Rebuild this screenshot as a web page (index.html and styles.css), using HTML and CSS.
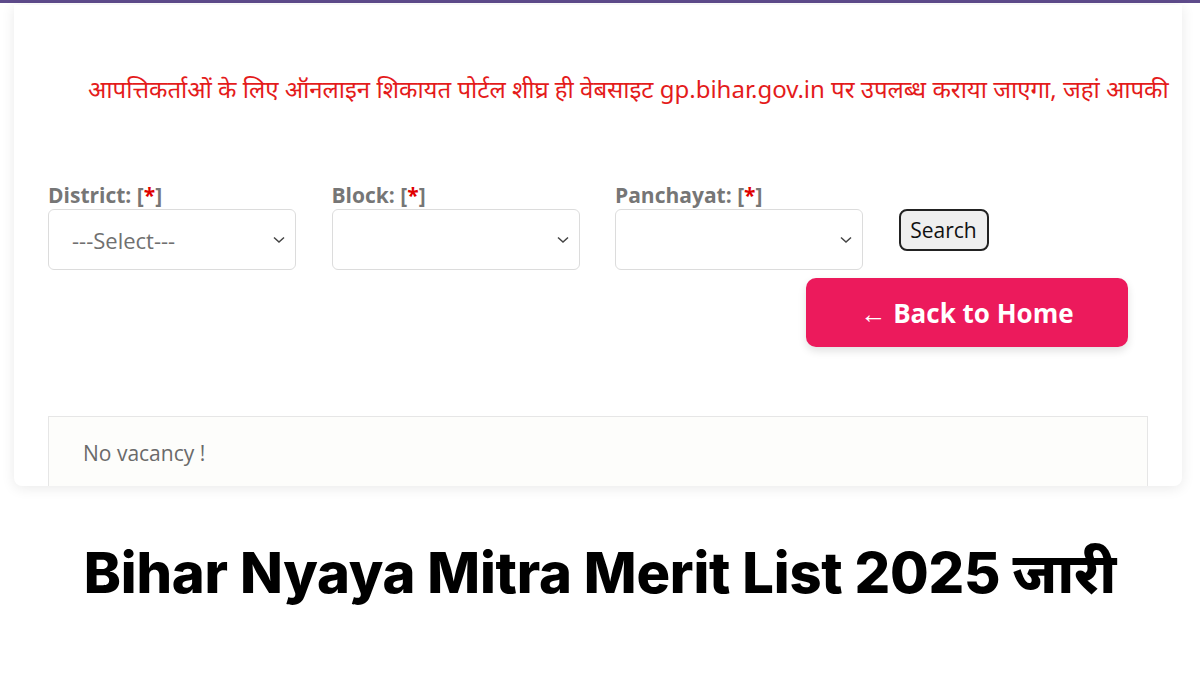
FILE: index.html
```html
<!DOCTYPE html>
<html lang="hi">
<head>
<meta charset="utf-8">
<title>Bihar Nyaya Mitra Merit List 2025</title>
<link rel="stylesheet" href="styles.css">
</head>
<body>
<div class="topbar"></div>
<div class="card">
  <div class="notice"><span>आपत्तिकर्ताओं के लिए ऑनलाइन शिकायत पोर्टल शीघ्र ही वेबसाइट gp.bihar.gov.in पर उपलब्ध कराया जाएगा, जहां आपकी</span></div>
  <div class="form">
    <div class="field">
      <label class="lbl">District: [<span class="req">*</span>]</label>
      <div class="select"><span class="val">---Select---</span><svg class="chev" viewBox="0 0 12 8" width="12" height="8"><path d="M1 1.5 L6 6 L11 1.5" fill="none" stroke="#444" stroke-width="1.5"/></svg></div>
    </div>
    <div class="field">
      <label class="lbl">Block: [<span class="req">*</span>]</label>
      <div class="select"><span class="val"></span><svg class="chev" viewBox="0 0 12 8" width="12" height="8"><path d="M1 1.5 L6 6 L11 1.5" fill="none" stroke="#444" stroke-width="1.5"/></svg></div>
    </div>
    <div class="field">
      <label class="lbl">Panchayat: [<span class="req">*</span>]</label>
      <div class="select"><span class="val"></span><svg class="chev" viewBox="0 0 12 8" width="12" height="8"><path d="M1 1.5 L6 6 L11 1.5" fill="none" stroke="#444" stroke-width="1.5"/></svg></div>
    </div>
    <button class="search">Search</button>
  </div>
  <div class="back-row">
    <a class="back">← Back to Home</a>
  </div>
  <div class="result">No vacancy !</div>
</div>
<h1 class="title">Bihar Nyaya Mitra Merit List 2025 जारी</h1>
</body>
</html>
```

FILE: styles.css
```css
html, body {
  margin: 0;
  padding: 0;
  background: #ffffff;
}
body {
  width: 1200px;
  height: 675px;
  overflow: hidden;
  font-family: "Open Sans", "Noto Sans", sans-serif;
}
.topbar {
  height: 3px;
  background: #5e4b8b;
}
.card {
  margin: 2px 18px 0 14px;
  height: 481px;
  background: #ffffff;
  border-radius: 0 0 8px 8px;
  box-shadow: 0 2px 14px rgba(0, 0, 0, 0.09);
  overflow: hidden;
  box-sizing: border-box;
  padding: 0 34px;
}
.notice {
  margin: 64px -34px 0 0;
  padding-left: 40px;
  white-space: nowrap;
  overflow: hidden;
  color: #e41b1b;
  font-family: "Noto Sans", "Open Sans", sans-serif;
  font-size: 24px;
  line-height: 40px;
}
.form {
  display: flex;
  align-items: center;
  gap: 35.5px;
  margin-top: 72px;
}
.field {
  display: flex;
  flex-direction: column;
  width: 248px;
}
.lbl {
  font-family: "Open Sans", sans-serif;
  font-weight: 700;
  font-size: 21px;
  line-height: 28px;
  color: #767676;
}
.req {
  color: #e00000;
}
.select {
  height: 61px;
  box-sizing: border-box;
  border: 1px solid #dcdcdc;
  border-radius: 6px;
  background: #fff;
  display: flex;
  align-items: center;
  justify-content: space-between;
  padding: 0 10px 0 23px;
}
.val {
  font-size: 22px;
  color: #707070;
}
.chev {
  display: block;
}
.search {
  margin-top: 28px;
  align-self: flex-start;
  font-family: "Open Sans", sans-serif;
  font-size: 21px;
  height: 42px;
  width: 90px;
  padding: 0;
  background: #efefef;
  color: #111;
  border: 2px solid #222;
  border-radius: 8px;
  line-height: 36px;
}
.back-row {
  display: flex;
  justify-content: flex-end;
  margin-top: 8px;
  padding-right: 20px;
}
.back {
  display: flex;
  align-items: center;
  justify-content: center;
  width: 322px;
  height: 69px;
  background: #ec1a5c;
  color: #fff;
  border-radius: 10px;
  font-weight: 700;
  font-size: 26px;
  box-shadow: 0 4px 8px rgba(0, 0, 0, 0.12);
}
.result {
  margin-top: 69px;
  height: 90px;
  border: 1px solid #e6e6e6;
  background: #fdfdfb;
  box-sizing: border-box;
  padding: 22px 34px;
  font-size: 21px;
  color: #6a6a6a;
}
.title {
  margin: 53px 0 0;
  text-align: center;
  font-family: "Inter", "Noto Sans", sans-serif;
  font-weight: 800;
  font-size: 56px;
  line-height: 68px;
  color: #000;
  letter-spacing: -0.2px;
}
```
